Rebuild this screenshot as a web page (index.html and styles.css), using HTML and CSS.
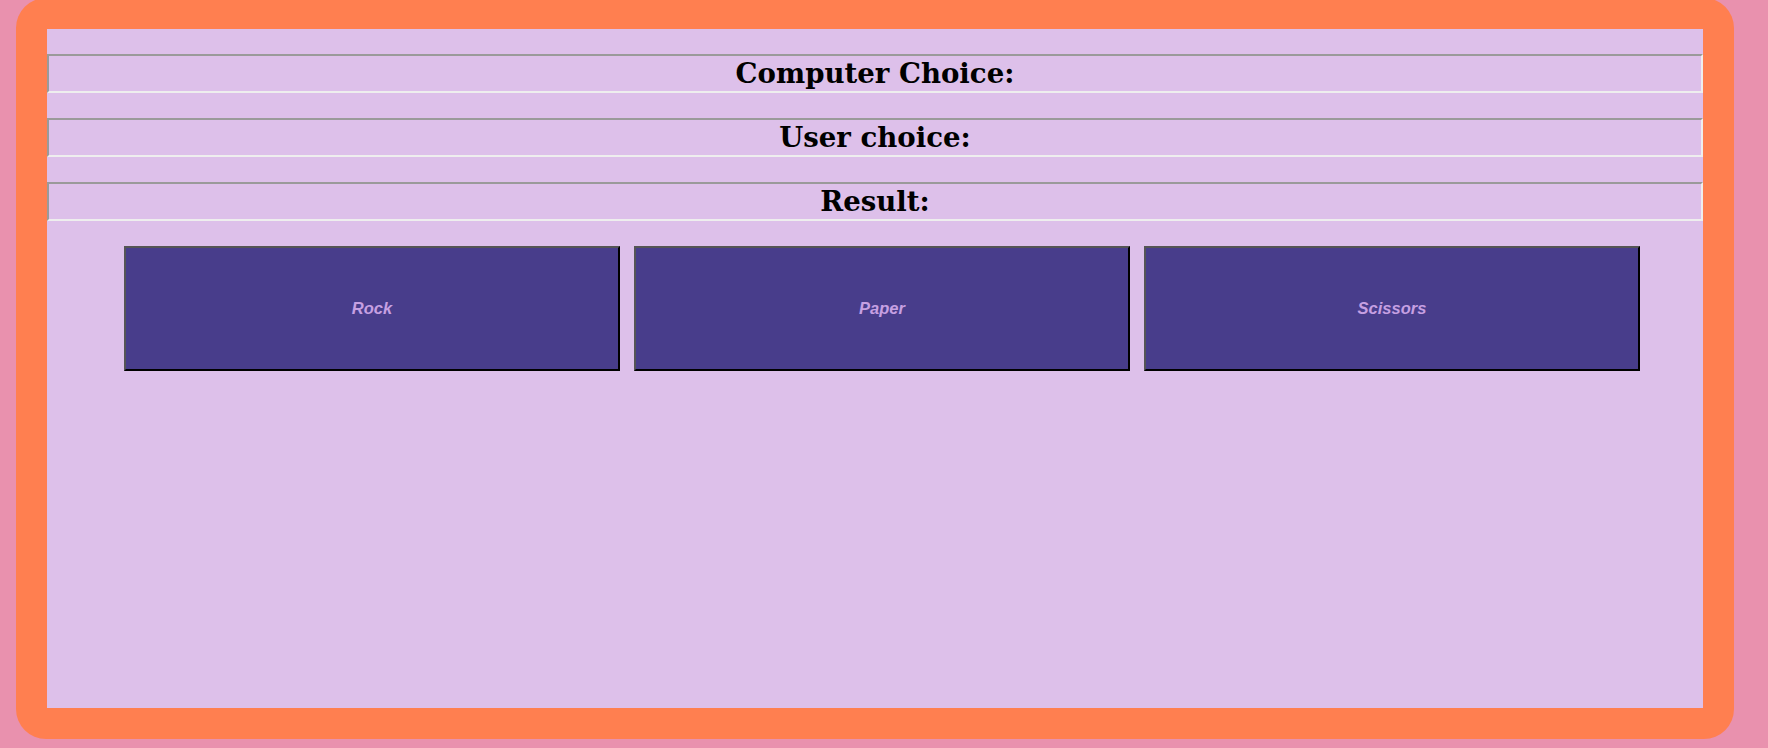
FILE: index.html
```html
<!DOCTYPE html>
<html>
<head>
<meta charset="utf-8">
<title>Rock Paper Scissors</title>
<link rel="stylesheet" href="styles.css">
</head>
<body>
<div class="frame">
  <h2 class="line">Computer Choice:</h2>
  <h2 class="line">User choice:</h2>
  <h2 class="line">Result:</h2>
  <div class="choices">
    <button class="choice">Rock</button>
    <button class="choice">Paper</button>
    <button class="choice">Scissors</button>
  </div>
</div>
</body>
</html>
```
FILE: styles.css
```css
html, body {
  margin: 0;
  padding: 0;
}
body {
  background: #e991ae;
  height: 748px;
  overflow: hidden;
}
.frame {
  margin: -2px 34px 0 16px;
  border: 31px solid #ff7f50;
  border-radius: 30px;
  background: #ddc0ea;
  height: 679px;
  display: flow-root;
}
.line {
  margin: 25px 0;
  font-family: "DejaVu Serif", Georgia, serif;
  font-weight: bold;
  font-size: 27.6px;
  line-height: 35px;
  text-align: center;
  color: #000;
  border-style: solid;
  border-width: 2px;
  border-color: #9a9a9a #eeeeee #eeeeee #9a9a9a;
}
.choices {
  display: flex;
  gap: 14px;
  padding-left: 77px;
}
.choice {
  width: 496px;
  height: 125px;
  margin: 0;
  padding: 0;
  background: #483d8b;
  border-style: solid;
  border-width: 2px;
  border-color: #555555 #000000 #000000 #555555;
  font-family: "Liberation Sans", Arial, sans-serif;
  font-weight: bold;
  font-style: italic;
  font-size: 16.5px;
  color: #c6a0e2;
}
```
